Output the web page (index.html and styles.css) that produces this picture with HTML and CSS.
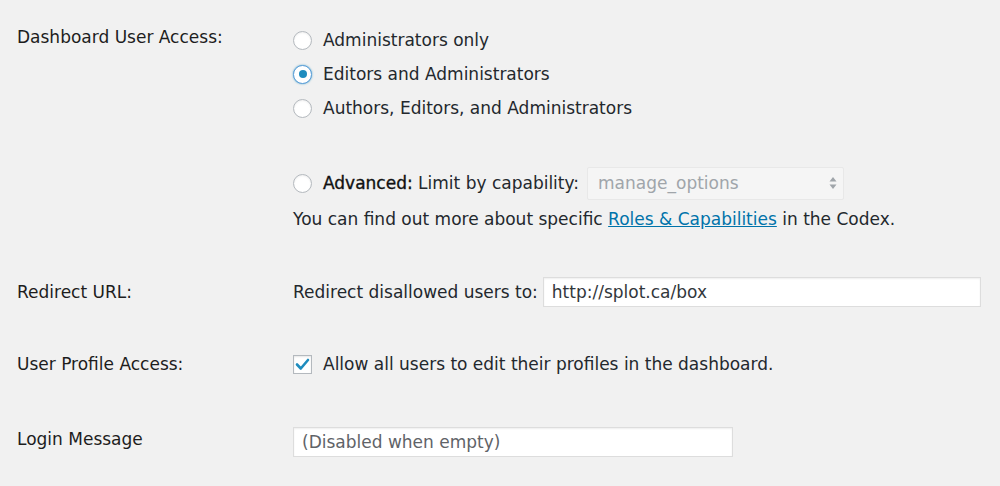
FILE: index.html
```html
<!DOCTYPE html>
<html>
<head>
<meta charset="utf-8">
<link rel="stylesheet" href="styles.css">
</head>
<body>
<div class="form">
  <div class="row row-top">
    <div class="label">Dashboard User Access:</div>
    <div class="field">
      <label class="opt"><span class="radio"></span>Administrators only</label>
      <label class="opt"><span class="radio checked"></span>Editors and Administrators</label>
      <label class="opt"><span class="radio"></span>Authors, Editors, and Administrators</label>
      <div class="opt adv"><span class="radio"></span><span class="strong">Advanced:</span>&nbsp;Limit by capability:
        <div class="select"><span>manage_options</span>
          <svg class="arrows" width="8" height="14" viewBox="0 0 8 14"><path d="M4 1 L7.5 5.5 H0.5 Z M4 13 L7.5 8.5 H0.5 Z" fill="#a0a5aa"/></svg>
        </div>
      </div>
      <p class="desc">You can find out more about specific <a href="#">Roles &amp; Capabilities</a> in the Codex.</p>
    </div>
  </div>
  <div class="row row-redirect">
    <div class="label">Redirect URL:</div>
    <div class="field inline">
      <span>Redirect disallowed users to:</span>
      <div class="input wide">http://splot.ca/box</div>
    </div>
  </div>
  <div class="row row-profile">
    <div class="label">User Profile Access:</div>
    <div class="field inline">
      <span class="checkbox"><svg width="15" height="13" viewBox="0 0 15 13"><path d="M2 6.5 L5.8 10.5 L13 2" fill="none" stroke="#1e8cbe" stroke-width="2.6" stroke-linecap="round" stroke-linejoin="round"/></svg></span>
      <span>Allow all users to edit their profiles in the dashboard.</span>
    </div>
  </div>
  <div class="row row-login">
    <div class="label login-label">Login Message</div>
    <div class="field">
      <div class="input login placeholder">(Disabled when empty)</div>
    </div>
  </div>
</div>
</body>
</html>
```

FILE: styles.css
```css
html, body {
  margin: 0;
  padding: 0;
  background: #f1f1f1;
}
body {
  font-family: "DejaVu Sans", "Liberation Sans", sans-serif;
  font-size: 17px;
  color: #23282d;
  width: 1000px;
  height: 486px;
  overflow: hidden;
}
.form {
  padding-top: 23px;
}
.row {
  display: flex;
}
.label {
  width: 276px;
  padding-left: 17px;
  color: #1d1d1d;
}
.field {
  flex: 1;
}
.row-top .label {
  padding-top: 4px;
}
.opt {
  display: flex;
  align-items: center;
  height: 34px;
}
.radio {
  box-sizing: border-box;
  width: 19px;
  height: 19px;
  border: 1px solid #b4b9be;
  border-radius: 50%;
  background: #fff;
  box-shadow: inset 0 1px 2px rgba(0,0,0,0.07);
  margin-right: 11px;
  display: inline-flex;
  align-items: center;
  justify-content: center;
  flex: none;
}
.radio.checked {
  border-color: #5b9dd9;
  box-shadow: 0 0 2px rgba(30,140,190,0.8);
}
.radio.checked::after {
  content: "";
  width: 8px;
  height: 8px;
  border-radius: 50%;
  background: #1e8cbe;
}
.adv {
  margin-top: 41px;
}
.strong {
  color: #111;
  -webkit-text-stroke: 0.35px #111;
}
.select {
  box-sizing: border-box;
  margin-left: 8px;
  width: 257px;
  height: 33px;
  background: #f5f5f5;
  border: 1px solid #e8e8e8;
  border-radius: 2px;
  display: flex;
  align-items: center;
  justify-content: space-between;
  padding: 0 6px 0 10px;
  color: #a0a5aa;
}
.desc {
  margin: 2px 0 0;
  line-height: 34px;
}
.desc a {
  color: #0073aa;
  text-decoration: underline;
}
.row-redirect {
  margin-top: 41px;
  align-items: center;
}
.inline {
  display: flex;
  align-items: center;
}
.input {
  box-sizing: border-box;
  background: #fff;
  border: 1px solid #ddd;
  box-shadow: inset 0 1px 2px rgba(0,0,0,0.07);
  height: 30px;
  display: flex;
  align-items: center;
  padding: 0 8px;
  color: #32373c;
}
.input.wide {
  margin-left: 5px;
  width: 438px;
}
.row-profile {
  margin-top: 42px;
  align-items: center;
  height: 30px;
}
.checkbox {
  box-sizing: border-box;
  width: 19px;
  height: 19px;
  border: 1px solid #b4b9be;
  background: #fff;
  box-shadow: inset 0 1px 2px rgba(0,0,0,0.1);
  margin-right: 11px;
  display: inline-flex;
  align-items: center;
  justify-content: center;
}
.row-login {
  margin-top: 48px;
  align-items: center;
}
.login-label {
  margin-top: -7px;
}
.input.login {
  width: 440px;
}
.placeholder {
  color: #5f6368;
}
```
